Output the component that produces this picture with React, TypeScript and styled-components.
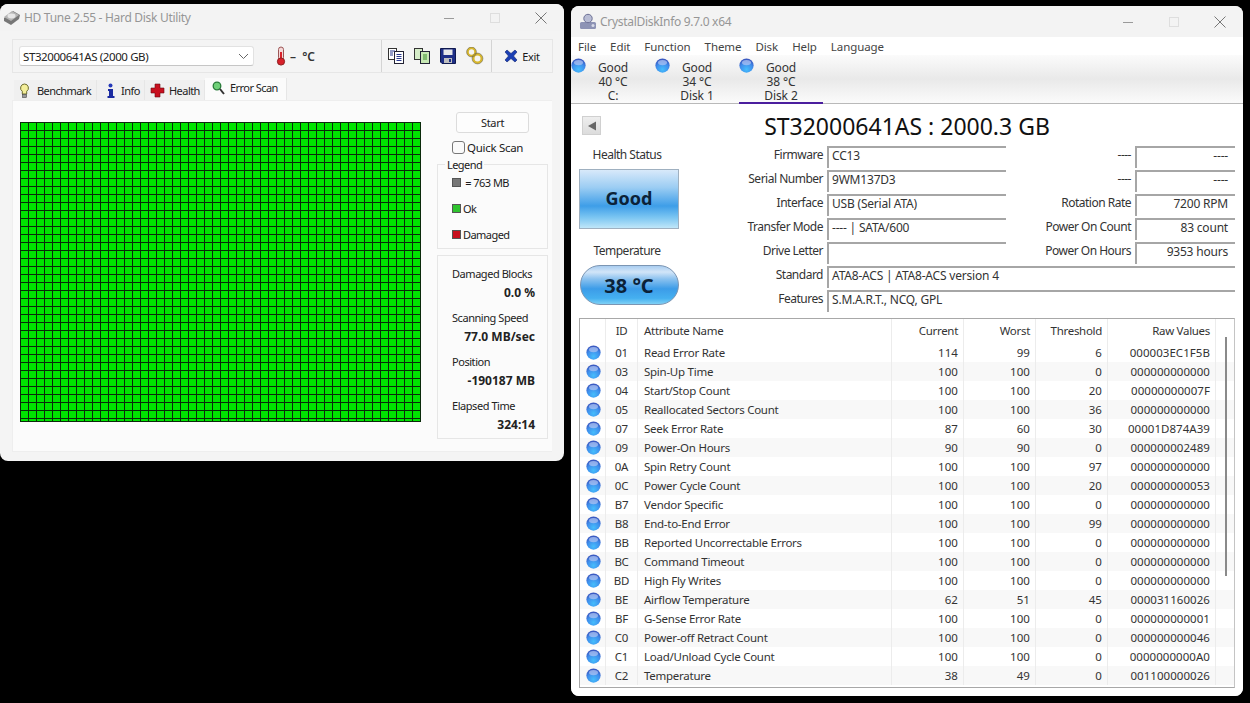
import React from "react";
import styled, { createGlobalStyle } from "styled-components";

const Global = createGlobalStyle`
  html, body { margin: 0; padding: 0; background: #000; width: 1250px; height: 703px; overflow: hidden; }
  #root { width: 1250px; height: 703px; }
  * { box-sizing: border-box; }
`;
const SANS = `"Noto Sans", "Open Sans", sans-serif`;

const Desktop = styled.div`
  position: relative; width: 1250px; height: 703px; background: #000; overflow: hidden;
  font-family: ${SANS}; font-size: 12px; color: #1a1a1a; letter-spacing: -0.3px;
`;
const Win = styled.div<{ $x: number; $y: number; $w: number; $h: number }>`
  position: absolute; left: ${p => p.$x}px; top: ${p => p.$y}px; width: ${p => p.$w}px; height: ${p => p.$h}px;
  border-radius: 8px; overflow: hidden; display: flex; flex-direction: column; background: #f4f4f4;
`;
const TitleBar = styled.div<{ $h: number; $pad: number }>`
  height: ${p => p.$h}px; flex: none; display: flex; align-items: center; padding-left: ${p => p.$pad}px; gap: 3px; background: #f3f3f3; color: #969696;
`;
const TitleText = styled.span`font-size: 12px; letter-spacing: -0.3px; flex: 1;`;
const Controls = styled.div`display: flex; height: 100%;`;
const Ctl = styled.div<{ $w: number }>`width: ${p => p.$w}px; display: flex; align-items: center; justify-content: center;`;

function WinControls({ w }: { w: number }) {
  return (
    <Controls>
      <Ctl $w={w}><svg width="12" height="12"><path d="M1 6.5h10" stroke="#9a9a9a" /></svg></Ctl>
      <Ctl $w={w}><svg width="12" height="12"><rect x="1.5" y="1.5" width="9" height="9" fill="none" stroke="#dedede" /></svg></Ctl>
      <Ctl $w={w}><svg width="12" height="12"><path d="M.5.5l11 11M11.5.5l-11 11" stroke="#777" /></svg></Ctl>
    </Controls>
  );
}

/* HD Tune */
const Toolbar = styled.div`
  margin: 8px 11px 0 12px; height: 34px; flex: none; display: flex; align-items: center; padding-left: 6px;
  border: 1px solid #e6e6e6;
`;
const Combo = styled.div`
  width: 236px; height: 20px; background: #fff; border: 1px solid #e2e2e2; border-bottom-color: #c6c6c6; border-radius: 3px; letter-spacing: -0.4px; font-size: 11.5px;
  display: flex; align-items: center; justify-content: space-between; padding: 0 4px 0 3px; color: #222;
`;
const TempRead = styled.div`display: flex; align-items: center; gap: 3px; margin-left: 21px; width: 106px; font-size: 12px; font-weight: 600; color: #333; letter-spacing: 0; word-spacing: 3px;`;
const ToolGroup = styled.div`
  width: 111px; height: 100%; display: flex; align-items: center; gap: 10px; border-left: 1px solid #d4d4d4; padding-left: 6px;
`;
const ExitGroup = styled.div`
  width: 61px; height: 100%; display: flex; align-items: center; gap: 4px; border-left: 1px solid #d4d4d4; padding-left: 12px; font-size: 11px; letter-spacing: -0.3px;
`;
const TabRow = styled.div`display: flex; align-items: flex-end; margin: 5px 0 0 14px; height: 22px; flex: none;`;
const TunedTab = styled.div<{ $w: number; $pad: number; $gap: number; $active?: boolean }>`
  width: ${p => p.$w}px; height: ${p => (p.$active ? 22 : 20)}px; display: flex; align-items: center; gap: ${p => p.$gap}px; padding-left: ${p => p.$pad}px;
  background: ${p => (p.$active ? "#fbfbfb" : "#f0f0f0")}; border-right: 1px solid #e6e6e6; color: #222;
  padding-bottom: ${p => (p.$active ? 3 : 0)}px; padding-top: ${p => (p.$active ? 0 : 1)}px; font-size: 11px; letter-spacing: -0.55px;
`;
const Panel = styled.div`
  margin: 0 12px; width: 540px; height: 352px; flex: none; background: #fbfbfb; border: 1px solid #eeeeee; border-right: 0; display: flex; padding: 21px 0 0 7px; gap: 16px;
`;
const ScanGrid = styled.div`
  width: 401px; height: 300px; flex: none; background-color: #00e400;
  background-image:
    linear-gradient(#0a2a0a 1px, transparent 1px),
    linear-gradient(90deg, #0a2a0a 1px, transparent 1px);
  background-size: 8px 8px; border-right: 1px solid #0a2a0a; border-bottom: 1px solid #0a2a0a;
`;
const Side = styled.div`width: 111px; flex: none; margin-top: -10px; display: flex; flex-direction: column;`;
const StartBtn = styled.div`
  margin-left: 19px; width: 73px; height: 21px; background: #fdfdfd; border: 1px solid #dcdcdc; border-radius: 3px; font-size: 11px; letter-spacing: -0.3px;
  display: flex; align-items: center; justify-content: center; color: #222;
`;
const QuickRow = styled.div`display: flex; align-items: center; gap: 2px; margin: 7px 0 0 15px; height: 14px; font-size: 11.5px; letter-spacing: -0.3px;`;
const Check = styled.span`width: 13px; height: 13px; border: 1px solid #777; border-radius: 3px; background: #fafafa;`;
const Legend = styled.div`
  position: relative; margin-top: 10px; height: 85px; border: 1px solid #e6e6e6; padding: 4px 0 0 14px; display: flex; flex-direction: column; font-size: 11px; letter-spacing: -0.55px;
`;
const LegendTitle = styled.span`position: absolute; left: 7px; top: -7px; background: #fbfbfb; padding: 0 2px; line-height: 14px;`;
const LegendRow = styled.div`height: 26px; display: flex; align-items: center; gap: 1px;`;
const Swatch = styled.span<{ $c: string }>`width: 9px; height: 9px; background: ${p => p.$c}; border: 1px solid #555; margin-right: 1px;`;
const Stats = styled.div`margin-top: 6px; height: 184px; border: 1px solid #e6e6e6; padding: 9px 0 0 14px; display: flex; flex-direction: column;`;
const StatLabel = styled.div`flex: none; height: 17px; line-height: 17px; color: #222; font-size: 11px; letter-spacing: -0.45px;`;
const StatValue = styled.div`flex: none; height: 27px; line-height: 22px; font-weight: 700; text-align: right; padding-right: 12px; color: #222; letter-spacing: 0;`;

/* Crystal */
const MenuBar = styled.div`height: 18px; flex: none; background: #fff; display: flex; align-items: center; padding-left: 7px; gap: 14px; color: #444; letter-spacing: -0.08px; font-size: 11.5px;`;
const DiskBand = styled.div`
  height: 49px; flex: none; display: flex; border-bottom: 1px solid #b9b9b9;
  background: linear-gradient(#fbfbfb 0%, #e9e9e9 50%, #fbfbfb 100%);
`;
const DiskTab = styled.div<{ $active?: boolean }>`
  position: relative; width: 84px; height: 49px; display: flex; flex-direction: column; align-items: center; padding-top: 6px;
  color: #333; letter-spacing: -0.1px; border-bottom: ${p => (p.$active ? "2px solid #4b1e9e" : "0")}; margin-bottom: -1px;
`;
const DiskLine = styled.div`height: 14px; line-height: 14px; flex: none;`;
const TabOrb = styled.span`position: absolute; left: 0; top: 3px; line-height: 0;`;
const CBody = styled.div`flex: 1; background: #fff; padding: 0 8px; display: flex; flex-direction: column; min-height: 0;`;
const HeadRow = styled.div`height: 41px; flex: none; display: flex; align-items: center; padding-left: 3px; padding-top: 2px;`;
const BackBtn = styled.div`
  width: 19px; height: 19px; background: linear-gradient(#eeeeee, #dcdcdc); border: 1px solid #d0d0d0; display: flex; align-items: center; justify-content: center;
`;
const DiskName = styled.div`flex: 1; text-align: center; font-size: 23px; letter-spacing: 0; color: #111; padding-right: 22px; line-height: 28px;`;
const InfoArea = styled.div`display: flex; height: 173px; flex: none;`;
const HealthCol = styled.div`width: 100px; flex: none; display: flex; flex-direction: column; align-items: center;`;
const HealthLabel = styled.div<{ $tall?: boolean }>`
  height: ${p => (p.$tall ? 36 : 24)}px; line-height: ${p => (p.$tall ? 44 : 20)}px; letter-spacing: -0.5px; color: #333; padding-right: 4px;
`;
const GoodBox = styled.div`
  width: 100px; height: 60px; border: 1px solid #9fb0c0; display: flex; align-items: center; justify-content: center;
  background: linear-gradient(#d8e9fa 0%, #9ccdf3 30%, #3e9ee8 62%, #7cc6f2 82%, #bfe6f8 100%);
  font-size: 18px; font-weight: 700; color: #0b2238; letter-spacing: 0; padding-bottom: 2px;
`;
const TempPill = styled.div`
  width: 99px; height: 40px; border-radius: 20px; border: 1px solid #7b95b3; display: flex; align-items: center; justify-content: center;
  background: linear-gradient(#a9cdf0 0%, #d2e5f8 16%, #8cc2ef 34%, #3c9ce8 60%, #45b0f0 85%, #7fd0f5 100%);
  font-size: 20px; font-weight: 700; color: #0b2238; letter-spacing: 0;
`;
const Fields = styled.div`flex: 1; display: flex; flex-direction: column; padding-top: 1px; margin-left: 3px;`;
const FieldRow = styled.div`height: 24px; flex: none; display: flex; align-items: flex-start;`;
const FieldLabel = styled.div<{ $w: number }>`width: ${p => p.$w}px; flex: none; height: 22px; line-height: 18px; text-align: right; color: #333; padding-right: 4px; letter-spacing: -0.5px;`;
const FieldValue = styled.div<{ $w: number; $right?: boolean }>`
  width: ${p => p.$w}px; flex: none; height: 22px; border-top: 2px solid #a6a6a6; border-left: 2px solid #a6a6a6; background: #fff; padding: 0 7px 0 3px;
  line-height: 16px; color: #333; white-space: nowrap; letter-spacing: -0.2px; text-align: ${p => (p.$right ? "right" : "left")};
`;
const Table = styled.div`
  position: relative; flex: none; height: 370px; border: 1px solid #a8a8a8; border-right-color: #c4c4c4; overflow: hidden; background: #fff; color: #333; font-size: 11.5px;
`;
const GRID = "26px 32px 254px 72px 72px 72px 108px 19px";
const HeaderRow = styled.div`display: grid; grid-template-columns: ${GRID}; height: 24px;`;
const Row = styled.div<{ $odd: boolean }>`display: grid; grid-template-columns: ${GRID}; height: 19px; background: ${p => (p.$odd ? "#f8f8f8" : "#fff")};`;
const Cell = styled.div<{ $align?: string }>`
  line-height: 19px; border-right: 1px solid #ececec; white-space: nowrap; letter-spacing: ${p => (p.$align === "right" ? "0.05px" : "-0.26px")};
  text-align: ${p => p.$align || "left"}; padding: ${p => (p.$align === "right" ? "0 5px 0 0" : p.$align === "center" ? "0" : "0 0 0 6px")};
`;
const HeadCell = styled(Cell)`line-height: 23px; letter-spacing: -0.3px;`;
const OrbCell = styled.div`display: flex; align-items: center; padding-left: 6px; border-right: 1px solid #ececec;`;
const ScrollThumb = styled.div`position: absolute; left: 645px; top: 18px; width: 2px; height: 239px; background: #8a8a8a;`;

const Orb = ({ s = 15 }: { s?: number }) => (
  <svg width={s} height={s} viewBox="0 0 16 16">
    <defs>
      <radialGradient id="orbg" cx="50%" cy="78%" r="72%">
        <stop offset="0" stopColor="#45bdfc" /><stop offset=".6" stopColor="#3f8fec" /><stop offset="1" stopColor="#3a58c0" />
      </radialGradient>
    </defs>
    <circle cx="8" cy="8" r="7.6" fill="url(#orbg)" />
    <ellipse cx="8" cy="4.8" rx="4.800" ry="2.800" fill="#b4c4f2" opacity=".7" />
  </svg>
);

const DiskIcon = () => (
  <svg width="18" height="18" viewBox="0 0 18 18"><path d="M1 9L10 2l7 4-1 4-8 6-7-4z" fill="#777" /><path d="M1 8l8-6 7 4-8 6z" fill="#b5b5b5" /><ellipse cx="8.5" cy="7" rx="4" ry="2.4" fill="#e6e6e6" /></svg>
);
const CrystalIcon = () => (
  <svg width="18" height="18" viewBox="0 0 18 18"><rect x="1" y="9" width="16" height="7" rx="1.5" fill="#8d93b5" /><circle cx="9" cy="5.5" r="4.2" fill="#b8bcd4" stroke="#6d7196" /><circle cx="14" cy="12.5" r="1.5" fill="#d8dbe9" /></svg>
);
const Thermo = () => (
  <svg width="12" height="20" viewBox="0 0 12 20"><rect x="3.5" y="1" width="5" height="13" rx="2.5" fill="#f4d8d8" stroke="#9c5555" /><rect x="5" y="6" width="2" height="9" fill="#d8202a" /><circle cx="6" cy="15.5" r="3.6" fill="#d8202a" stroke="#8c2020" /></svg>
);
const Bulb = () => (
  <svg width="11" height="16" viewBox="0 0 11 16"><path d="M5.5 1a4 4 0 0 0-2.2 7.3V11h4.4V8.300A4 4 0 0 0 5.500 1z" fill="#f3ee9a" stroke="#6b6b2e" /><rect x="3.500" y="11.500" width="4" height="3" fill="#999" stroke="#444" strokeWidth=".6" /></svg>
);
const InfoIcon = () => (
  <svg width="11" height="16" viewBox="0 0 11 16"><circle cx="5.500" cy="2.500" r="2" fill="#2438b8" /><path d="M3 6h5v7h1.500v2h-7v-2H4V8H3z" fill="#1a2aa0" /></svg>
);
const CrossIcon = () => (
  <svg width="15" height="15" viewBox="0 0 15 15"><path d="M5 1h5v4h4v5h-4v4H5v-4H1V5h4z" fill="#c80f1e" stroke="#6a0a12" strokeWidth=".6" /></svg>
);
const Magnifier = () => (
  <svg width="13" height="14" viewBox="0 0 13 14"><circle cx="5" cy="5" r="3.800" fill="#6fd078" stroke="#267a37" strokeWidth="1.300" /><path d="M8 8l4 5" stroke="#333" strokeWidth="2" /></svg>
);
const DocsIcon = ({ green }: { green?: boolean }) => (
  <svg width="16" height="16" viewBox="0 0 16 16">
    <rect x=".5" y=".5" width="8" height="11" fill={green ? "#d5ecc8" : "#fff"} stroke="#333" />
    <rect x="6.500" y="3.500" width="9" height="12" fill={green ? "#c7e8b4" : "#fff"} stroke="#223" />
    <path d={green ? "M9 7h4M9 9h4M9 11h4" : "M8.500 6.500h5M8.500 8.500h5M8.500 10.500h5M8.500 12.500h5M2 3h5M2 5h3M2 7h3"} stroke={green ? "#3a8f2c" : "#2a3a8f"} />
  </svg>
);
const Floppy = () => (
  <svg width="16" height="16" viewBox="0 0 16 16"><path d="M.5.500h15v15H2l-1.500-1.500z" fill="#1f2f86" stroke="#101a50" /><rect x="3.500" y="1.500" width="9" height="5.500" fill="#e8e8e8" /><rect x="4" y="10" width="8" height="5" fill="#bfbfbf" /><rect x="9" y="11" width="2" height="3" fill="#1f2f86" /></svg>
);
const Keys = () => (
  <svg width="18" height="18" viewBox="0 0 18 18"><circle cx="5.500" cy="5" r="3.800" fill="none" stroke="#d8b72c" strokeWidth="2.200" /><circle cx="11.500" cy="11.500" r="4.200" fill="none" stroke="#d8b72c" strokeWidth="2.400" /><circle cx="5.500" cy="5" r="4.900" fill="none" stroke="#555" strokeWidth=".5" /><circle cx="11.500" cy="11.500" r="5.400" fill="none" stroke="#555" strokeWidth=".5" /></svg>
);
const ExitX = () => (
  <svg width="14" height="14" viewBox="0 0 14 14"><path d="M1 3l2-2 4 3.500L11 1l2 2-3.500 4L13 11l-2 2-4-3.500L3 13l-2-2 3.500-4z" fill="#1b3fb5" stroke="#10246e" strokeWidth=".6" /></svg>
);
const Chevron = () => (
  <svg width="11" height="7" viewBox="0 0 11 7"><path d="M1 1l4.500 4.500L10 1" fill="none" stroke="#666" /></svg>
);

type Attr = [string, string, number, number, number, string];
const attrs: Attr[] = [
  ["01", "Read Error Rate", 114, 99, 6, "000003EC1F5B"],
  ["03", "Spin-Up Time", 100, 100, 0, "000000000000"],
  ["04", "Start/Stop Count", 100, 100, 20, "00000000007F"],
  ["05", "Reallocated Sectors Count", 100, 100, 36, "000000000000"],
  ["07", "Seek Error Rate", 87, 60, 30, "00001D874A39"],
  ["09", "Power-On Hours", 90, 90, 0, "000000002489"],
  ["0A", "Spin Retry Count", 100, 100, 97, "000000000000"],
  ["0C", "Power Cycle Count", 100, 100, 20, "000000000053"],
  ["B7", "Vendor Specific", 100, 100, 0, "000000000000"],
  ["B8", "End-to-End Error", 100, 100, 99, "000000000000"],
  ["BB", "Reported Uncorrectable Errors", 100, 100, 0, "000000000000"],
  ["BC", "Command Timeout", 100, 100, 0, "000000000000"],
  ["BD", "High Fly Writes", 100, 100, 0, "000000000000"],
  ["BE", "Airflow Temperature", 62, 51, 45, "000031160026"],
  ["BF", "G-Sense Error Rate", 100, 100, 0, "000000000001"],
  ["C0", "Power-off Retract Count", 100, 100, 0, "000000000046"],
  ["C1", "Load/Unload Cycle Count", 100, 100, 0, "0000000000A0"],
  ["C2", "Temperature", 38, 49, 0, "001100000026"],
];
const fields = [
  ["Firmware", "CC13", "----", "----"],
  ["Serial Number", "9WM137D3", "----", "----"],
  ["Interface", "USB (Serial ATA)", "Rotation Rate", "7200 RPM"],
  ["Transfer Mode", "---- | SATA/600", "Power On Count", "83 count"],
  ["Drive Letter", "", "Power On Hours", "9353 hours"],
];

export default function App() {
  return (
    <Desktop>
      <Global />
      <Win $x={0} $y={4} $w={564} $h={457}>
        <TitleBar $h={27} $pad={3}>
          <DiskIcon />
          <TitleText>HD Tune 2.55 - Hard Disk Utility</TitleText>
          <WinControls w={46} />
        </TitleBar>
        <Toolbar>
          <Combo>ST32000641AS (2000 GB)<Chevron /></Combo>
          <TempRead><Thermo />– °C</TempRead>
          <ToolGroup><DocsIcon /><DocsIcon green /><Floppy /><Keys /></ToolGroup>
          <ExitGroup><ExitX />Exit</ExitGroup>
        </Toolbar>
        <TabRow>
          <TunedTab $w={83} $pad={5} $gap={7}><Bulb />Benchmark</TunedTab>
          <TunedTab $w={48} $pad={8} $gap={5}><InfoIcon />Info</TunedTab>
          <TunedTab $w={60} $pad={5} $gap={4}><CrossIcon />Health</TunedTab>
          <TunedTab $w={82} $pad={7} $gap={5} $active><Magnifier />Error Scan</TunedTab>
        </TabRow>
        <Panel>
          <ScanGrid />
          <Side>
            <StartBtn>Start</StartBtn>
            <QuickRow><Check />Quick Scan</QuickRow>
            <Legend>
              <LegendTitle>Legend</LegendTitle>
              <LegendRow><Swatch $c="#777" />&nbsp;= 763 MB</LegendRow>
              <LegendRow><Swatch $c="#2fc42f" />Ok</LegendRow>
              <LegendRow><Swatch $c="#c8101e" />Damaged</LegendRow>
            </Legend>
            <Stats>
              <StatLabel>Damaged Blocks</StatLabel><StatValue>0.0 %</StatValue>
              <StatLabel>Scanning Speed</StatLabel><StatValue>77.0 MB/sec</StatValue>
              <StatLabel>Position</StatLabel><StatValue>-190187 MB</StatValue>
              <StatLabel>Elapsed Time</StatLabel><StatValue>324:14</StatValue>
            </Stats>
          </Side>
        </Panel>
      </Win>

      <Win $x={571} $y={6} $w={672} $h={690}>
        <TitleBar $h={31} $pad={8}>
          <CrystalIcon />
          <TitleText>CrystalDiskInfo 9.7.0 x64</TitleText>
          <WinControls w={46} />
        </TitleBar>
        <MenuBar>
          {["File", "Edit", "Function", "Theme", "Disk", "Help", "Language"].map(m => <span key={m}>{m}</span>)}
        </MenuBar>
        <DiskBand>
          {[["40 °C", "C:"], ["34 °C", "Disk 1"], ["38 °C", "Disk 2"]].map(([t, n], i) => (
            <DiskTab key={n} $active={i === 2}>
              <TabOrb><Orb /></TabOrb>
              <DiskLine>Good</DiskLine><DiskLine>{t}</DiskLine><DiskLine>{n}</DiskLine>
            </DiskTab>
          ))}
        </DiskBand>
        <CBody>
          <HeadRow>
            <BackBtn><svg width="10" height="10"><path d="M9 0.500v9L1 5z" fill="#666" /></svg></BackBtn>
            <DiskName>ST32000641AS : 2000.3 GB</DiskName>
          </HeadRow>
          <InfoArea>
            <HealthCol>
              <HealthLabel>Health Status</HealthLabel>
              <GoodBox>Good</GoodBox>
              <HealthLabel $tall>Temperature</HealthLabel>
              <TempPill>38 °C</TempPill>
            </HealthCol>
            <Fields>
              {fields.map(([a, b, c, d]) => (
                <FieldRow key={a}>
                  <FieldLabel $w={145}>{a}</FieldLabel>
                  <FieldValue $w={179}>{b}</FieldValue>
                  <FieldLabel $w={129}>{c}</FieldLabel>
                  <FieldValue $w={100} $right>{d}</FieldValue>
                </FieldRow>
              ))}
              <FieldRow><FieldLabel $w={145}>Standard</FieldLabel><FieldValue $w={408}>ATA8-ACS | ATA8-ACS version 4</FieldValue></FieldRow>
              <FieldRow><FieldLabel $w={145}>Features</FieldLabel><FieldValue $w={408}>S.M.A.R.T., NCQ, GPL</FieldValue></FieldRow>
            </Fields>
          </InfoArea>
          <Table>
            <HeaderRow>
              <HeadCell />
              <HeadCell $align="center">ID</HeadCell>
              <HeadCell>Attribute Name</HeadCell>
              <HeadCell $align="right">Current</HeadCell>
              <HeadCell $align="right">Worst</HeadCell>
              <HeadCell $align="right">Threshold</HeadCell>
              <HeadCell $align="right">Raw Values</HeadCell>
            </HeaderRow>
            {attrs.map((a, i) => (
              <Row key={a[0]} $odd={i % 2 === 1}>
                <OrbCell><Orb /></OrbCell>
                <Cell $align="center">{a[0]}</Cell>
                <Cell>{a[1]}</Cell>
                <Cell $align="right">{a[2]}</Cell>
                <Cell $align="right">{a[3]}</Cell>
                <Cell $align="right">{a[4]}</Cell>
                <Cell $align="right">{a[5]}</Cell>
              </Row>
            ))}
            <ScrollThumb />
          </Table>
        </CBody>
      </Win>
    </Desktop>
  );
}
